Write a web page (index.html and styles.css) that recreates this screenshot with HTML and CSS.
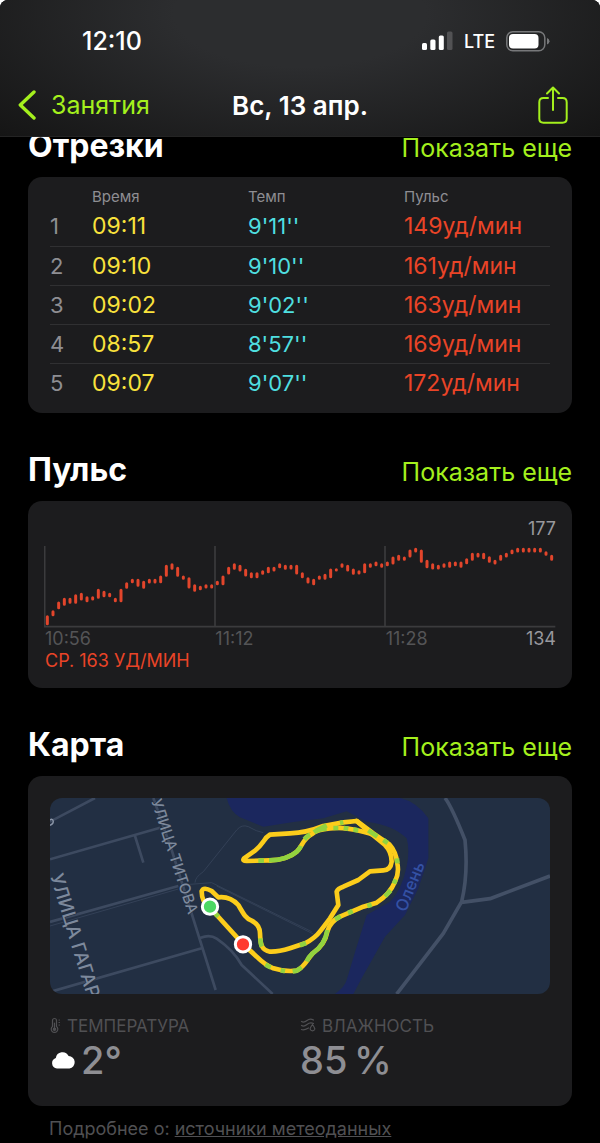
FILE: index.html
```html
<!DOCTYPE html>
<html lang="ru">
<head>
    <meta charset="UTF-8">
    <meta name="viewport" content="width=device-width, initial-scale=1.0">
    <title>Вс, 13 апр.</title>
    <link rel="stylesheet" href="styles.css">
</head>
<body>
    <div class="app">
        <header class="header">
            <div class="status-bar">
                <span class="clock">12:10</span>
                <div class="status-icons">
                    <svg width="31" height="20" viewBox="0 0 31 20" fill="#fff">
                        <rect x="0" y="12" width="5" height="7" rx="1.5"/>
                        <rect x="8.300" y="8.500" width="5.200" height="10.500" rx="1.500"/>
                        <rect x="16.800" y="4.500" width="5" height="14.500" rx="1.500"/>
                        <rect x="25" y="0.500" width="5.500" height="18.500" rx="1.500" fill="#525254"/>
                    </svg>
                    <span class="network">LTE</span>
                    <svg width="44" height="21" viewBox="0 0 44 21">
                        <rect x="0.800" y="0.800" width="38" height="19" rx="6" fill="none" stroke="#77787a" stroke-width="1.500"/>
                        <rect x="3" y="3" width="29.500" height="14.600" rx="4" fill="#fff"/>
                        <path d="M41 7v6.500q2.500-1 2.500-3.200T41 7z" fill="#77787a"/>
                    </svg>
                </div>
            </div>
            <nav class="nav-bar">
                <a class="back" href="#">
                    <svg width="18" height="30" viewBox="0 0 18 30" fill="none" stroke="currentColor" stroke-width="3.400" stroke-linecap="round" stroke-linejoin="round">
                        <path d="M16 2L2.300 15L16 28"/>
                    </svg>
                    Занятия
                </a>
                <h1>Вс, 13 апр.</h1>
                <button class="share" aria-label="Поделиться">
                    <svg width="30" height="38" viewBox="0 0 30 38" fill="none" stroke="currentColor" stroke-width="2" stroke-linecap="round" stroke-linejoin="round">
                        <path d="M10 12H5.500Q1.300 12 1.300 16.200V32.500Q1.300 36.700 5.500 36.700H24.500Q28.700 36.700 28.700 32.500V16.200Q28.700 12 24.500 12H20"/>
                        <path d="M15 24V1.500M9 7.500L15 1.500L21 7.500"/>
                    </svg>
                </button>
            </nav>
        </header>

        <main>
            <section>
                <div class="section-head">
                    <h2>Отрезки</h2>
                    <a href="#">Показать еще</a>
                </div>
                <div class="card splits">
                    <table>
                        <thead>
                            <tr><th class="num"></th><th class="time">Время</th><th class="pace">Темп</th><th class="pulse">Пульс</th></tr>
                        </thead>
                        <tbody>
                            <tr><td class="num">1</td><td class="time">09:11</td><td class="pace">9'11''</td><td class="pulse">149уд/мин</td></tr>
                            <tr><td class="num">2</td><td class="time">09:10</td><td class="pace">9'10''</td><td class="pulse">161уд/мин</td></tr>
                            <tr><td class="num">3</td><td class="time">09:02</td><td class="pace">9'02''</td><td class="pulse">163уд/мин</td></tr>
                            <tr><td class="num">4</td><td class="time">08:57</td><td class="pace">8'57''</td><td class="pulse">169уд/мин</td></tr>
                            <tr><td class="num">5</td><td class="time">09:07</td><td class="pace">9'07''</td><td class="pulse">172уд/мин</td></tr>
                        </tbody>
                    </table>
                </div>
            </section>

            <section>
                <div class="section-head">
                    <h2>Пульс</h2>
                    <a href="#">Показать еще</a>
                </div>
                <div class="card heart">
                    <div class="max">177</div>
                    <svg class="chart" viewBox="72 138 1536 246">
                        <path d="M74 138V380M585 138V380M1095 138V380M72 380H1606" fill="none" stroke="#3b3b3d" stroke-width="5"/>
                        <path id="bars" fill="none" stroke="#e2452b" stroke-width="9" stroke-linecap="round"/>
                    </svg>
                    <div class="axis">
                        <span>10:56</span>
                        <span>11:12</span>
                        <span>11:28</span>
                        <span class="min">134</span>
                    </div>
                    <div class="average">СР. 163 УД/МИН</div>
                </div>
            </section>

            <section>
                <div class="section-head">
                    <h2>Карта</h2>
                    <a href="#">Показать еще</a>
                </div>
                <div class="card map-card">
                    <svg class="map" viewBox="30 24 1500 588">
                        <rect x="30" y="24" width="1500" height="588" fill="#222f43"/>
                        <!-- river -->
                        <path d="M560 24H1080Q1130 35 1165 85V205L1135 295L1095 375L1035 440L965 565L940 612H885Q915 590 920 570L950 470L980 375L1050 335Q1085 300 1100 230Q1110 180 1100 145Q1060 105 980 95L920 64L850 85L760 96L670 110L600 82Q570 65 560 24Z" fill="#1b275e"/>
                        <!-- streets -->
                        <g fill="none" stroke="#3d4a60" stroke-width="8" stroke-linejoin="round">
                            <path d="M30 95L165 24M30 208L360 113M285 138L310 218M340 24L395 180L527 600M30 396L415 288M30 606L485 475M482 443Q510 432 530 446Q580 480 605 525L698 612"/>
                            <path d="M1215 24Q1235 50 1275 150Q1285 250 1265 335L1210 430L1070 612M1265 337L1350 326L1530 258" stroke="#435066" stroke-width="11"/>
                            <path d="M30 408L415 297M465 278Q465 262 490 245L590 120Q605 102 625 110Q650 125 670 128M450 283L515 278L815 425M530 288L820 432" stroke-width="2"/>
                        </g>
                        <path d="M28 90Q38 84 40 94Q40 104 28 106" fill="none" stroke="#8b96a8" stroke-width="4"/>
                        <g class="street" fill="#7d899c" stroke="#222f43" stroke-width="4" paint-order="stroke">
                            <text transform="translate(333 32) rotate(72)" font-size="45">УЛИЦА ТИТОВА</text>
                            <text transform="translate(30 257) rotate(73)" font-size="56">УЛИЦА ГАГАРИ</text>
                        </g>
                        <text class="river" transform="translate(1097 368) rotate(-68)" font-size="50" fill="#3451a4">Олень</text>
                        <!-- workout route -->
                        <g fill="none" stroke="#fccd1b" stroke-width="14" stroke-linejoin="round" stroke-linecap="round">
                            <path d="M510 350Q485 340 485 304Q490 289 515 303L535 322Q570 318 595 345C612 375 618 385 635 392Q660 405 660 430C661 465 665 480 690 485Q715 486 750 475L795 460Q825 445 842 422L870 385L895 345L890 305Q894 295 910 290L955 270L990 244L1030 241Q1052 240 1055 215Q1055 185 1035 165L990 128L950 93L910 97L850 108Q800 128 750 130L690 134Q679 140 670 155Q658 172 645 182L612 205Q606 213 620 213L690 211"/>
                            <path d="M690 211C725 210 755 198 770 185C788 170 785 150 815 133Q830 118 870 115Q910 110 970 125Q1010 133 1048 163Q1068 185 1072 220Q1078 250 1065 275Q1050 312 1010 338L970 350L900 380Q870 395 862 425Q855 465 818 490C800 510 795 530 770 542Q735 546 700 535Q675 525 650 500L610 463L530 375L510 350M950 93L1000 130L1048 163"/>
                        </g>
                        <g fill="none" stroke="#92d33f" stroke-width="14">
                            <path d="M661 445Q662 462 665 470M780 466L798 459M829 122L860 106M900 99L910 97M985 121L1012 140M655 212H672"/>
                            <path d="M687 211C725 210 755 198 770 185C776 180 780 174 783 168M793 148Q802 138 810 134M822 127Q835 117 860 116M880 114L895 114M911 114L925 116M940 119L955 121M1030 150L1043 159M1071 205L1072 220M1067 268L1062 281M1052 301L1035 319M995 344L982 348M938 363L924 369M902 379L885 388M862 420Q855 465 818 490Q805 502 800 514M785 532L770 542L758 544M735 544L722 541M692 532L676 524M535 380L525 370"/>
                        </g>
                        <circle cx="510" cy="350" r="23" fill="#4cd863" stroke="#fff" stroke-width="9"/>
                        <circle cx="609" cy="463" r="23" fill="#ff3b30" stroke="#fff" stroke-width="9"/>
                    </svg>
                    <div class="weather">
                        <div>
                            <div class="label">
                                <svg width="12" height="18" viewBox="0 0 12 18" fill="none" stroke="currentColor" stroke-width="1.200" stroke-linecap="round">
                                    <path d="M2.500 9.500V3.500a2 2 0 0 1 4 0v6a3.300 3.300 0 1 1-4 0zM4.500 6v6"/>
                                    <circle cx="4.500" cy="12.200" r="1.200" fill="currentColor"/>
                                    <path d="M9 3h.5M9 5.500h.5M9 8h.5"/>
                                </svg>
                                ТЕМПЕРАТУРА
                            </div>
                            <div class="value">
                                <svg width="26" height="18" viewBox="0 0 26 18" fill="#fff">
                                    <path d="M7 17.500A5.400 5.400 0 0 1 5.800 7A6.800 6.800 0 0 1 18.600 5A6.300 6.300 0 0 1 19.500 17.500Z"/>
                                </svg>
                                2°
                            </div>
                        </div>
                        <div>
                            <div class="label">
                                <svg width="17" height="18" viewBox="0 0 17 18" fill="none" stroke="currentColor" stroke-width="1.200" stroke-linecap="round">
                                    <path d="M1.500 4.500Q4 6 7 3.500T13.500 3M1.500 8.500Q4 10 7 7.500T13.500 6.500M1.500 12.500Q4 13.500 8.500 11"/>
                                    <path d="M12.500 7.500Q9.800 11 10.200 12.200A2.400 2.400 0 0 0 14.800 12.200Q15 11 12.500 7.500Z"/>
                                </svg>
                                ВЛАЖНОСТЬ
                            </div>
                            <div class="value">85&#8201;%</div>
                        </div>
                    </div>
                </div>
            </section>
        </main>

        <footer>Подробнее о: <a href="#">источники метеоданных</a></footer>
    </div>

    <script src="script.js"></script>
</body>
</html>
```
FILE: styles.css
```css
* {
    box-sizing: border-box;
}

body {
    margin: 0;
    background-color: #fff;
    color: #fff;
    font-family: Inter, "Noto Sans", sans-serif;
}

h1, h2 {
    margin: 0;
}

a {
    color: #a4f01d;
    text-decoration: none;
}

svg {
    display: block;
    flex: none;
}

.app {
    background-color: #000;
    border-radius: 8px 8px 0 0;
    overflow: hidden;
}

/* Header */
.header {
    position: relative;
    z-index: 1;
    padding: 20px 18px 0;
    background: radial-gradient(ellipse 70% 130% at 50% 10%, #2c2d2f 30%, rgba(44, 45, 47, 0) 100%), #151515;
    border-bottom: 1px solid #242424;
}

.status-bar {
    display: flex;
    justify-content: space-between;
    align-items: center;
    height: 42px;
    padding: 0 32px 0 64px;
}

.clock {
    font-size: 25px;
    font-weight: 500;
}

.status-icons {
    display: flex;
    align-items: center;
    gap: 11px;
}

.network {
    font-size: 18px;
    font-weight: 500;
}

.nav-bar {
    display: grid;
    grid-template-columns: 1fr auto 1fr;
    align-items: center;
    height: 74px;
    padding-top: 12px;
}

.nav-bar h1 {
    font-size: 26px;
    font-weight: 600;
}

.back {
    display: flex;
    align-items: center;
    gap: 15px;
    font-size: 25px;
}

.share {
    justify-self: end;
    padding: 0;
    margin-right: 14px;
    border: 0;
    background: none;
    color: #a4f01d;
    cursor: pointer;
}

/* The list is scrolled a little way under the header */
main {
    margin-top: -48px;
    padding: 0 28px;
}

.section-head {
    display: flex;
    justify-content: space-between;
    align-items: baseline;
    height: 88px;
    padding-top: 37px;
    line-height: 40px;
    font-size: 25px;
}

.section-head h2 {
    font-size: 32px;
    font-weight: 700;
}

.card {
    background-color: #1c1c1e;
    border-radius: 14px;
}

/* Splits */
.splits {
    padding: 10px 22px 11px;
}

.splits table {
    width: 100%;
    table-layout: fixed;
    border-collapse: collapse;
}

.splits th {
    height: 20px;
    padding: 0;
    color: #8e8e93;
    font-size: 15px;
    font-weight: 400;
    line-height: 20px;
    text-align: left;
}

.splits td {
    height: 39px;
    padding: 0;
    font-size: 23px;
    line-height: 38px;
}

.splits tr + tr td {
    border-top: 1px solid #303032;
}

.splits th.num {
    width: 8.4%;
}

.splits th.time,
.splits th.pace {
    width: 31.2%;
}

.splits td.num {
    color: #8e8e93;
    font-size: 22px;
}

.splits td.time {
    color: #f9e23c;
}

.splits td.pace {
    color: #4fdfe0;
    font-size: 22px;
}

.splits td.pulse {
    color: #ea4427;
}

/* Heart rate */
.heart {
    padding: 17px 16px 16px;
    font-size: 18px;
    line-height: 22px;
}

.max {
    margin-bottom: 6px;
    color: #98989d;
    text-align: right;
}

.chart {
    width: 100%;
}

.axis {
    display: grid;
    grid-template-columns: 1fr 1fr 1fr 0;
    padding-left: 1px;
    color: #545456;
}

.axis .min {
    justify-self: end;
    color: #98989d;
}

.average {
    padding-left: 1px;
    color: #ea4427;
}

/* Map */
.map-card {
    padding: 22px;
}

.map {
    width: 100%;
    border-radius: 12px;
}

.street,
.river {
    font-weight: 500;
}

.weather {
    display: grid;
    grid-template-columns: 1fr 1fr;
    padding: 20px 0 2px;
    color: #8e8e93;
}

.label {
    display: flex;
    align-items: center;
    gap: 5px;
    color: #505053;
    font-size: 17px;
    line-height: 24px;
}

.value {
    display: flex;
    align-items: center;
    gap: 5px;
    font-size: 38px;
    font-weight: 500;
    line-height: 44px;
}

footer {
    padding: 11px 49px 2px;
    color: #505053;
    font-size: 18px;
    line-height: 24px;
}

footer a {
    color: inherit;
    text-decoration: underline;
}
```
FILE: script.js
```js
// [top, bottom] of every heart rate range, in chart units
var ranges = [
    [346, 375], [331, 348], [305, 327], [294, 317], [294, 311], [283, 311], [279, 301], [289, 306], [289, 301],
    [267, 296], [273, 291], [279, 291], [294, 306], [267, 306], [247, 266], [237, 249], [237, 260], [243, 266],
    [237, 250], [237, 250], [227, 249], [195, 230], [190, 209], [201, 230], [227, 239], [232, 265], [253, 275],
    [258, 270], [253, 265], [253, 265], [243, 255], [227, 255], [201, 223], [190, 209], [195, 214], [207, 229],
    [217, 234], [217, 234], [211, 224], [201, 219], [201, 214], [190, 204], [195, 209], [195, 208], [195, 223],
    [217, 234], [232, 250], [237, 255], [227, 239], [222, 239], [206, 234], [206, 213], [190, 203], [195, 214],
    [206, 224], [211, 223], [190, 219], [190, 203], [185, 198], [190, 203], [185, 198], [170, 193], [165, 182],
    [170, 182], [149, 172], [144, 157], [149, 188], [180, 204], [190, 208], [195, 208], [190, 203], [185, 203],
    [185, 198], [185, 203], [175, 192], [159, 182], [159, 172], [159, 177], [169, 188], [180, 193], [165, 182],
    [159, 172], [149, 162], [144, 157], [144, 157], [144, 157], [144, 157], [144, 157], [154, 167], [165, 182]
];

var path = ranges.map(function(range, i) {
    var x = 82 + i * 17;
    return "M" + x + " " + (range[0] + 4) + "V" + (range[1] - 4);
}).join("");

document.getElementById("bars").setAttribute("d", path);
```
